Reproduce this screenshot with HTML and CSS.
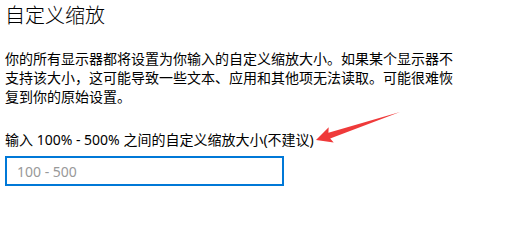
FILE: index.html
```html
<!DOCTYPE html>
<html lang="zh-CN">
<head>
<meta charset="utf-8">
<link rel="stylesheet" href="styles.css">
</head>
<body>
<main class="page">
  <h1 class="title">自定义缩放</h1>
  <p class="desc">你的所有显示器都将设置为你输入的自定义缩放大小。如果某个显示器不支持该大小，这可能导致一些文本、应用和其他项无法读取。可能很难恢复到你的原始设置。</p>
  <label class="label" for="scale">输入 100% - 500% 之间的自定义缩放大小(不建议)</label>
  <input class="field" id="scale" type="text" placeholder="100 - 500">
  <svg class="arrow" width="516" height="201" viewBox="0 0 516 201" aria-hidden="true">
    <polygon points="316,140 328.7,127.3 328.4,132.8 400,112 330.2,138.4 333.7,142.5" fill="#ef3a3a"/>
  </svg>
</main>
</body>
</html>
```

FILE: styles.css
```css
html, body {
  margin: 0;
  padding: 0;
  background: #ffffff;
}
.page {
  position: relative;
  width: 516px;
  height: 201px;
  box-sizing: border-box;
  padding: 0 0 0 5px;
  font-family: "Noto Sans", "Noto Sans CJK SC", sans-serif;
  color: #000;
  overflow: hidden;
}
.title {
  margin: 0;
  padding-top: 2px;
  font-size: 20px;
  line-height: 28px;
  font-weight: 300;
}
.desc {
  margin: 19px 0 0;
  width: 460px;
  font-size: 14px;
  line-height: 19px;
}
.label {
  display: block;
  margin-top: 24px;
  font-size: 14px;
  line-height: 19px;
}
.field {
  display: block;
  margin: 7px 0 0;
  width: 279px;
  height: 30px;
  box-sizing: border-box;
  border: 2px solid #0078d7;
  padding: 0 10px;
  font-family: "Noto Sans", "Noto Sans CJK SC", sans-serif;
  font-size: 14px;
  outline: none;
  background: #fff;
}
.field::placeholder {
  color: #999;
}
.arrow {
  position: absolute;
  left: 0;
  top: 0;
  pointer-events: none;
}
```
